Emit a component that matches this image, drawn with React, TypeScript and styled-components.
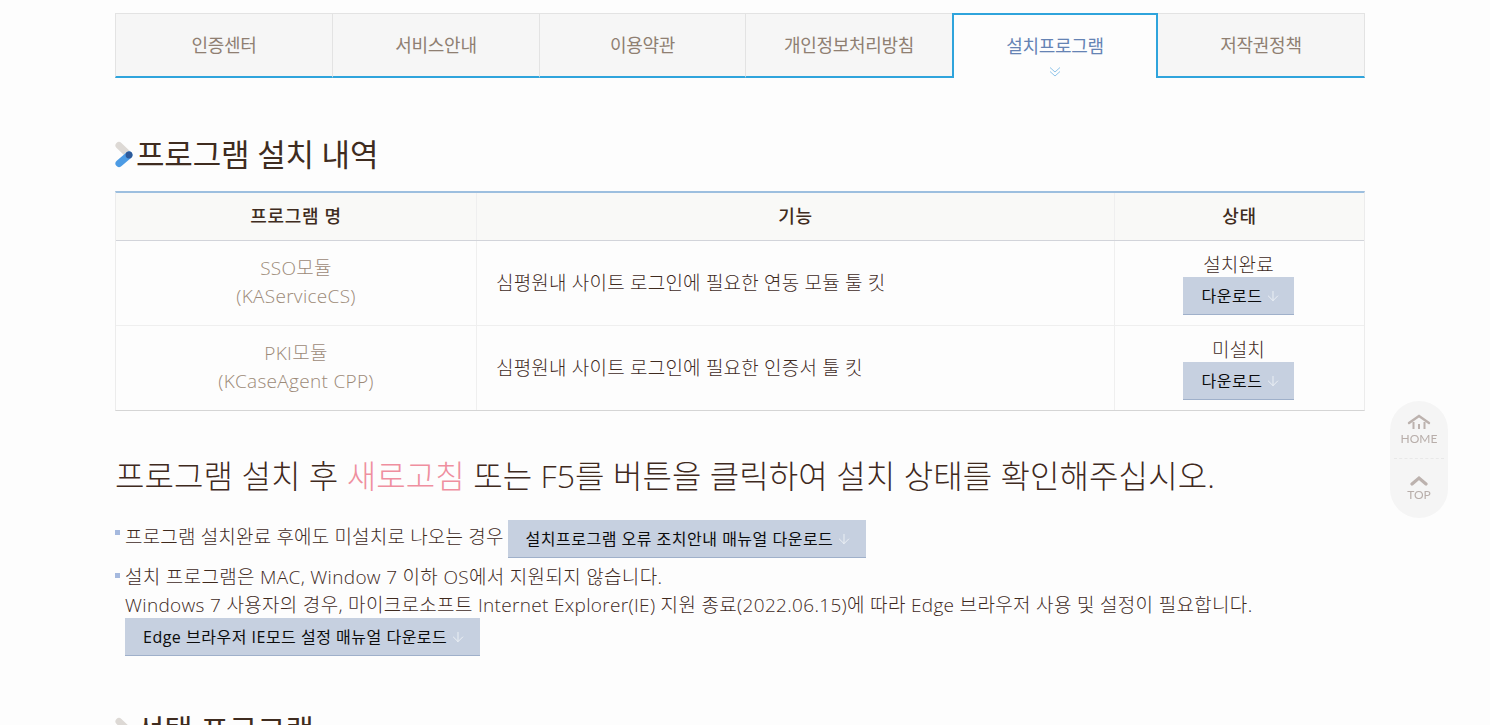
import { createGlobalStyle } from 'styled-components'
import styled from 'styled-components'
import { ArrowDown } from 'lucide-react'

const GlobalStyle = createGlobalStyle`
  html, body {
    margin: 0;
    padding: 0;
    height: 725px;
    overflow: hidden;
    background: #fdfdfd;
    font-family: 'Open Sans', 'Noto Sans CJK KR', sans-serif;
    font-weight: 300;
    color: #3f2a1e;
  }
`

const Page = styled.div`
  width: 1250px;
  margin-left: 115px;
  padding-top: 13px;
`

const Tabs = styled.ul`
  display: flex;
  height: 65px;
  margin: 0;
  padding: 0;
  list-style: none;
  box-sizing: border-box;
`

const Tab = styled.li<{ $w: number; $active?: boolean }>`
  position: relative;
  flex: 0 0 ${(p) => p.$w}px;
  box-sizing: border-box;
  display: flex;
  align-items: center;
  justify-content: center;
  font-size: 18px;
  font-weight: 400;
  padding-bottom: 3px;
  letter-spacing: -0.3px;
  color: ${(p) => (p.$active ? '#6583b4' : '#8f7f72')};
  background: ${(p) => (p.$active ? '#fdfdfd' : '#f6f6f6')};
  border-top: ${(p) => (p.$active ? '2px solid #2fa4dc' : '1px solid #e3e3e3')};
  border-left: ${(p) => (p.$active ? '2px solid #2fa4dc' : '1px solid #e3e3e3')};
  border-right: ${(p) => (p.$active ? '2px solid #2fa4dc' : 'none')};
  border-bottom: ${(p) => (p.$active ? 'none' : '2px solid #2fa4dc')};
  &:last-child {
    border-right: 1px solid #e3e3e3;
    border-left: none;
  }
`

const TabMark = styled.svg`
  position: absolute;
  left: 50%;
  bottom: 0;
  margin-left: -6px;
`

const SectionTitle = styled.h2`
  display: flex;
  align-items: center;
  gap: 2px;
  margin: 0;
  height: 44px;
  font-size: 31px;
  font-weight: 400;
  letter-spacing: -0.2px;
  color: #3f2c20;
`

const TitleText = styled.span`
  position: relative;
  top: -2px;
`

const FirstTitle = styled(SectionTitle)`
  margin-top: 54px;
`

const LastTitle = styled(SectionTitle)`
  margin-top: 52px;
`

const Table = styled.div`
  margin-top: 15px;
  border-top: 2px solid #9dbfdf;
  border-bottom: 1px solid #d5d5d5;
  border-left: 1px solid #ececec;
  border-right: 1px solid #ececec;
`

const Row = styled.div<{ $head?: boolean }>`
  display: grid;
  grid-template-columns: 360px 638px 1fr;
  height: ${(p) => (p.$head ? '47px' : '84px')};
  background: ${(p) => (p.$head ? '#f9f9f7' : 'transparent')};
  border-bottom: ${(p) => (p.$head ? '1px solid #d2d4da' : '1px solid #efefef')};
  &:last-child {
    border-bottom: none;
  }
`

const Cell = styled.div<{ $left?: boolean }>`
  display: flex;
  flex-direction: column;
  align-items: ${(p) => (p.$left ? 'flex-start' : 'center')};
  justify-content: center;
  padding-left: ${(p) => (p.$left ? '19px' : '0')};
  padding-bottom: 3px;
  border-left: 1px solid #efefef;
  font-size: 19px;
  letter-spacing: 0.2px;
  &:first-child {
    border-left: none;
  }
`

const HeadCell = styled(Cell)`
  font-size: 18px;
  font-weight: 500;
  letter-spacing: 0.7px;
  color: #3f2c20;
`

const ProgramName = styled(Cell)`
  color: #9c8a78;
  line-height: 28px;
  letter-spacing: 0.3px;
`

const StatusCell = styled(Cell)`
  line-height: 24px;
  padding: 2px 2px 0 0;
`

const Download = styled.a<{ $compact?: boolean }>`
  display: inline-flex;
  align-items: center;
  justify-content: center;
  gap: 3px;
  box-sizing: border-box;
  height: 38px;
  padding: ${(p) => (p.$compact ? '0 0 0 6px' : '0 14px 0 18px')};
  width: ${(p) => (p.$compact ? '111px' : 'auto')};
  background: #c6d0e0;
  border-bottom: 1px solid #9fb0ca;
  color: #0b0b0b;
  font-size: 16px;
  font-weight: 400;
  letter-spacing: 0.5px;
  svg {
    color: #eef1f6;
    flex: none;
  }
`

const Notice = styled.p`
  margin: 43px 0 0;
  height: 44px;
  line-height: 44px;
  font-size: 32px;
  letter-spacing: 0.07px;
`

const Accent = styled.span`
  color: #ef8f9f;
`

const Notes = styled.ul`
  margin: 22px 0 0;
  padding: 0;
  list-style: none;
  font-size: 19px;
  line-height: 28px;
  letter-spacing: 0.32px;
`

const Note = styled.li`
  position: relative;
  padding-left: 10px;
  & + & {
    margin-top: 5px;
  }
  &::before {
    content: '';
    position: absolute;
    left: 0;
    top: 10px;
    width: 5px;
    height: 5px;
    background: #a5b9de;
  }
`

const NoteLine = styled.div`
  display: flex;
  align-items: flex-start;
  gap: 4px;
  height: 38px;
  line-height: 34px;
  letter-spacing: 0.17px;
`

const BlockDownload = styled.div`
  height: 38px;
  margin-top: -1px;
`

const Flip = styled.nav`
  position: fixed;
  left: 1390px;
  top: 401px;
  width: 58px;
  height: 117px;
  border-radius: 29px;
  background: #f5f5f5;
  display: flex;
  flex-direction: column;
  align-items: center;
  color: #b8aeaa;
  font-family: 'Lato', 'Noto Sans', sans-serif;
  font-size: 12px;
  font-weight: 400;
`

const FlipItem = styled.div<{ $bottom?: boolean }>`
  width: 50px;
  height: 59px;
  display: flex;
  flex-direction: column;
  align-items: center;
  padding-top: ${(p) => (p.$bottom ? '16px' : '13px')};
  box-sizing: border-box;
  line-height: 12px;
  gap: 3px;
  border-bottom: ${(p) => (p.$bottom ? 'none' : '1px dashed #e8e8e8')};
`

const tabs = [
  { label: '인증센터', w: 217 },
  { label: '서비스안내', w: 207 },
  { label: '이용약관', w: 206 },
  { label: '개인정보처리방침', w: 207 },
  { label: '설치프로그램', w: 206, active: true },
  { label: '저작권정책', w: 207 },
]

const programs = [
  {
    name: 'SSO모듈',
    code: '(KAServiceCS)',
    desc: '심평원내 사이트 로그인에 필요한 연동 모듈 툴 킷',
    status: '설치완료',
  },
  {
    name: 'PKI모듈',
    code: '(KCaseAgent CPP)',
    desc: '심평원내 사이트 로그인에 필요한 인증서 툴 킷',
    status: '미설치',
  },
]

const TitleMark = () => (
  <svg width="19" height="28" viewBox="0 0 19 28">
    <line x1="4" y1="5.5" x2="14" y2="15" stroke="#ddd9d5" strokeWidth="7" strokeLinecap="round" />
    <line x1="4" y1="23.5" x2="14" y2="15" stroke="#4c9be4" strokeWidth="7" strokeLinecap="round" />
    <circle cx="14" cy="15" r="3.4" fill="#2d5a9a" />
  </svg>
)

const HomeIcon = () => (
  <svg width="24" height="16" viewBox="0 0 24 16" fill="none" stroke="#bcb2ae">
    <path d="M2 9 L12 2 L22 9" strokeWidth="2.4" strokeLinecap="round" />
    <path d="M6.5 8 V15 M17.5 8 V15 M12 10 V15" strokeWidth="2" />
  </svg>
)

const TopIcon = () => (
  <svg width="18" height="11" viewBox="0 0 18 11" fill="none" stroke="#bcb2ae">
    <path d="M2 9 L9 3 L16 9" strokeWidth="3.2" strokeLinecap="round" />
  </svg>
)

const DownArrow = () => <ArrowDown size={16} strokeWidth={1.4} />

const App = () => {
  return (
    <Page>
      <GlobalStyle />
      <Tabs>
        {tabs.map(({ label, w, active }) => (
          <Tab key={label} $w={w} $active={active}>
            {label}
            {active && (
              <TabMark width="12" height="12" viewBox="0 0 12 12" fill="none" stroke="#8fc4ea">
                <path d="M1 1.5 L6 6 L11 1.5 M1 5.5 L6 10 L11 5.5" />
              </TabMark>
            )}
          </Tab>
        ))}
      </Tabs>

      <FirstTitle>
        <TitleMark />
        <TitleText>프로그램 설치 내역</TitleText>
      </FirstTitle>

      <Table>
        <Row $head>
          <HeadCell>프로그램 명</HeadCell>
          <HeadCell>기능</HeadCell>
          <HeadCell>상태</HeadCell>
        </Row>
        {programs.map(({ name, code, desc, status }) => (
          <Row key={name}>
            <ProgramName>
              <span>{name}</span>
              <span>{code}</span>
            </ProgramName>
            <Cell $left>{desc}</Cell>
            <StatusCell>
              {status}
              <Download $compact>
                다운로드 <DownArrow />
              </Download>
            </StatusCell>
          </Row>
        ))}
      </Table>

      <Notice>
        프로그램 설치 후 <Accent>새로고침</Accent> 또는 F5를 버튼을 클릭하여 설치 상태를 확인해주십시오.
      </Notice>

      <Notes>
        <Note>
          <NoteLine>
            프로그램 설치완료 후에도 미설치로 나오는 경우
            <Download>
              설치프로그램 오류 조치안내 매뉴얼 다운로드 <DownArrow />
            </Download>
          </NoteLine>
        </Note>
        <Note>
          설치 프로그램은 MAC, Window 7 이하 OS에서 지원되지 않습니다.
          <br />
          Windows 7 사용자의 경우, 마이크로소프트 Internet Explorer(IE) 지원 종료(2022.06.15)에 따라 Edge 브라우저 사용 및 설정이 필요합니다.
          <BlockDownload>
            <Download>
              Edge 브라우저 IE모드 설정 매뉴얼 다운로드 <DownArrow />
            </Download>
          </BlockDownload>
        </Note>
      </Notes>

      <LastTitle>
        <TitleMark />
        <TitleText>선택 프로그램</TitleText>
      </LastTitle>

      <Flip>
        <FlipItem>
          <HomeIcon />
          HOME
        </FlipItem>
        <FlipItem $bottom>
          <TopIcon />
          TOP
        </FlipItem>
      </Flip>
    </Page>
  )
}

export default App
